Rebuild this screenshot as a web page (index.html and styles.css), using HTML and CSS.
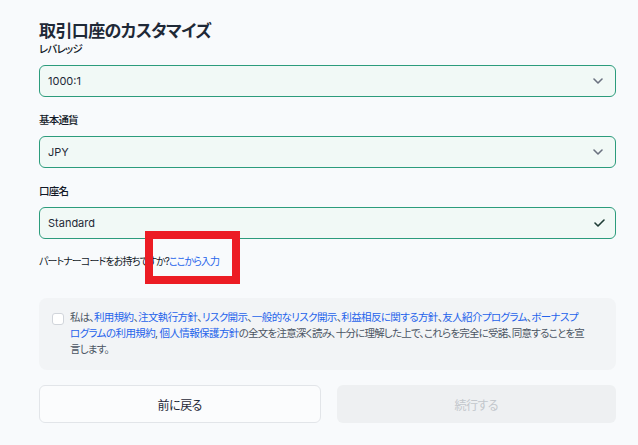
FILE: index.html
```html
<!DOCTYPE html>
<html lang="ja">
<head>
    <meta charset="UTF-8">
    <meta name="viewport" content="width=device-width, initial-scale=1.0">
    <title>取引口座のカスタマイズ</title>
    <link rel="stylesheet" href="styles.css">
</head>
<body>
    <div class="page">
        <h1>取引口座のカスタマイズ</h1>

        <div class="field-group first">
            <label>レバレッジ</label>
            <div class="field">
                <span>1000:1</span>
                <svg class="chevron" width="10" height="6" viewBox="0 0 10 6"><path d="M1 1l4 4 4-4" fill="none" stroke="#6b7280" stroke-width="1.6" stroke-linecap="round" stroke-linejoin="round"/></svg>
            </div>
        </div>

        <div class="field-group">
            <label>基本通貨</label>
            <div class="field">
                <span>JPY</span>
                <svg class="chevron" width="10" height="6" viewBox="0 0 10 6"><path d="M1 1l4 4 4-4" fill="none" stroke="#6b7280" stroke-width="1.6" stroke-linecap="round" stroke-linejoin="round"/></svg>
            </div>
        </div>

        <div class="field-group">
            <label>口座名</label>
            <div class="field">
                <span>Standard</span>
                <svg class="check" width="11" height="8" viewBox="0 0 11 8"><path d="M1 4l3 3 6-6" fill="none" stroke="#1f3d36" stroke-width="1.6" stroke-linecap="round" stroke-linejoin="round"/></svg>
            </div>
        </div>

        <p class="partner">
            パートナーコードをお持ちですか?<a href="#">ここから入力</a>
            <span class="mark"></span>
        </p>

        <div class="agree">
            <span class="checkbox"></span>
            <p>私は、<a href="#">利用規約</a>、<a href="#">注文執行方針</a>、<a href="#">リスク開示</a>、<a href="#">一般的なリスク開示</a>、<a href="#">利益相反に関する方針</a>、<a href="#">友人紹介プログラム</a>、<a href="#">ボーナスプログラムの利用規約</a>, <a href="#">個人情報保護方針</a>の全文を注意深く読み、十分に理解した上で、これらを完全に受諾、同意することを宣言します。</p>
        </div>

        <div class="buttons">
            <button class="btn back">前に戻る</button>
            <button class="btn next" disabled>続行する</button>
        </div>
    </div>
</body>
</html>
```

FILE: styles.css
```css
* {
    box-sizing: border-box;
    margin: 0;
    padding: 0;
}

body {
    font-family: "Inter", "Noto Sans CJK JP", sans-serif;
    font-feature-settings: "palt";
    background-color: #f8fafc;
    color: #111827;
}

.page {
    padding: 20px 22px 0 39px;
}

h1 {
    font-size: 17px;
    line-height: 22px;
    font-weight: 700;
    letter-spacing: -0.6px;
    color: #1f2937;
}

.field-group {
    margin-top: 16px;
}

.field-group.first {
    margin-top: 0;
}

.field-group label {
    display: block;
    font-size: 10.5px;
    line-height: 16px;
    font-weight: 500;
    letter-spacing: -0.8px;
    margin-bottom: 7px;
}

.field {
    display: flex;
    justify-content: space-between;
    align-items: center;
    height: 32px;
    padding: 0 12px 0 8px;
    border: 1px solid #2c9c7c;
    border-radius: 6px;
    background: #f1f9f6;
    font-size: 11px;
    color: #1f2937;
}

.check {
    margin-right: -2px;
}

.partner {
    position: relative;
    margin-top: 14px;
    font-size: 10px;
    line-height: 16px;
    letter-spacing: -0.9px;
}

.partner a {
    color: #2563eb;
    text-decoration: none;
}

/* 注釈の赤枠 */
.mark {
    position: absolute;
    left: 106px;
    top: -22px;
    width: 95px;
    height: 53px;
    border: 8px solid #ec1c24;
}

.agree {
    display: flex;
    align-items: flex-start;
    margin-top: 29px;
    padding: 12px 29px 12px 13px;
    background: #f2f4f6;
    border-radius: 8px;
}

.checkbox {
    flex: none;
    width: 12px;
    height: 12px;
    margin-top: 3px;
    margin-right: 6px;
    border: 1px solid #d1d5db;
    border-radius: 3px;
    background: #fff;
}

.agree p {
    font-size: 10.5px;
    line-height: 16px;
    letter-spacing: -0.78px;
    color: #4b5563;
}

.agree a {
    color: #2563eb;
    text-decoration: none;
    letter-spacing: -0.6px;
}

.buttons {
    display: flex;
    gap: 16px;
    margin-top: 15px;
}

.btn {
    flex: 1;
    height: 38px;
    border-radius: 6px;
    font-family: inherit;
    font-size: 12px;
    font-feature-settings: "palt";
    letter-spacing: -0.5px;
}

.btn.back {
    background: #fbfcfd;
    border: 1px solid #e2e5e9;
    color: #1f2937;
}

.btn.next {
    background: #eef0f2;
    border: none;
    color: #c3c7cc;
}
```
